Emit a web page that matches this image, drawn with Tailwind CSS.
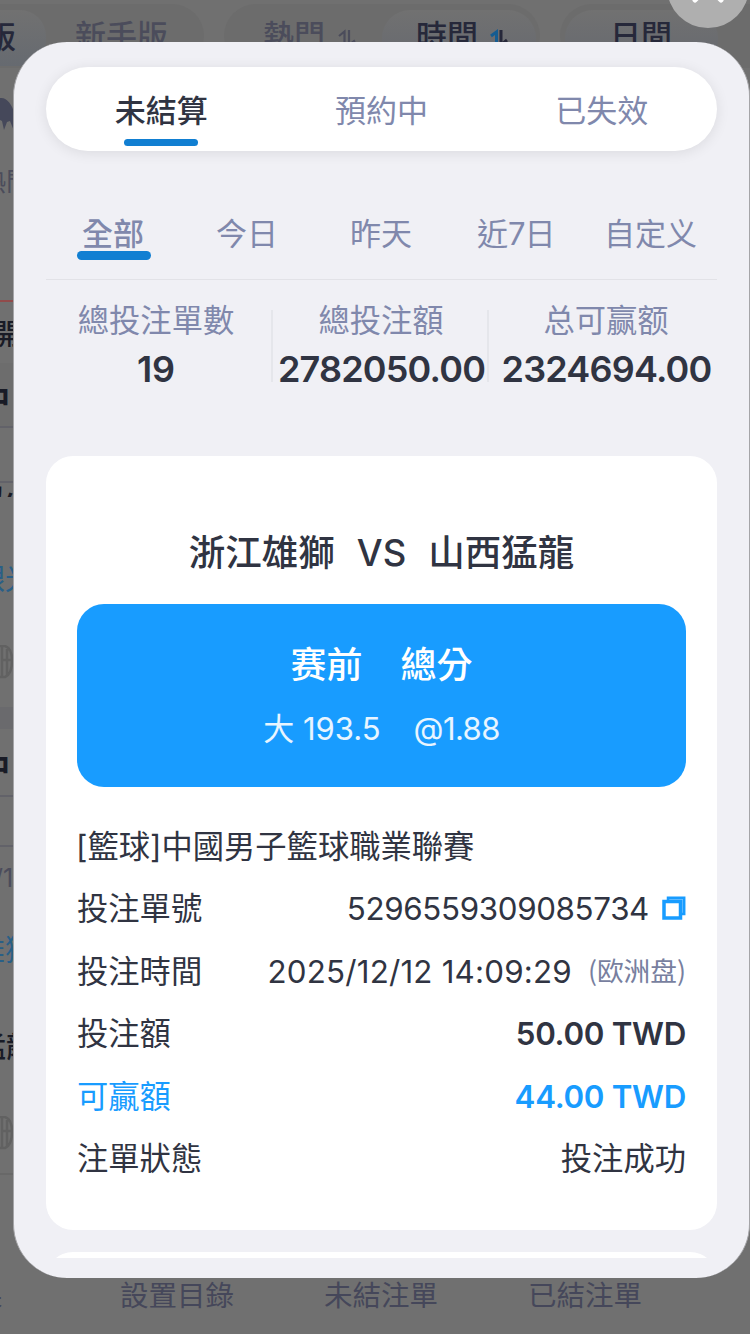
<!DOCTYPE html>
<html lang="zh-Hant">
<head>
<meta charset="utf-8">
<meta name="viewport" content="width=device-width">
<title>未結算注單</title>
<script src="https://cdn.jsdelivr.net/npm/@tailwindcss/browser@4"></script>
</head>
<body class="relative h-[1334px] w-[750px] overflow-hidden bg-[#707070] font-['Inter','Noto_Sans_CJK_TC',sans-serif] text-[#303442] whitespace-nowrap">

<!-- Dimmed page behind the dialog -->
<div class="flex h-full flex-col">
  <header class="flex h-[68px] shrink-0 pt-1 text-[31px] leading-[63px] text-[#4b4c5b]">
    <div class="flex w-[204px] shrink-0 rounded-r-[34px] bg-[#6c6c6c]">
      <div class="mt-1.5 h-[56px] w-[46px] rounded-r-[26px] bg-linear-to-b from-[#717171] to-[#666a70] leading-[53px]"><span class="-ml-[15px] font-medium text-[#26283a]">版</span></div>
      <span class="ml-[29px] font-medium">新手版</span>
    </div>
    <div class="ml-[20px] flex w-[316px] shrink-0 rounded-[34px] bg-[#6c6c6c]">
      <span class="ml-[39px] font-medium">熱門</span>
      <svg class="ml-[13px] mt-[24px] h-[20px] w-[20px]" viewBox="0 0 20 20" fill="none" stroke-width="2.2"><path d="M1 8L6.500 3.500V20" stroke="#4b4c5b"/><path d="M11 2V17L17 12.500" stroke="#4b4c5b"/></svg>
      <div class="ml-[24px] mt-1.5 flex h-[60px] w-[154px] rounded-[28px] bg-linear-to-b from-[#717171] to-[#65686f] pl-[34px] leading-[51px]">
        <span class="font-medium text-[#26283a]">時間</span>
        <svg class="ml-[12px] mt-[18px] h-[20px] w-[20px]" viewBox="0 0 20 20" fill="none" stroke-width="3"><path d="M1 8L6.500 4V20" stroke="#155c91"/><path d="M11 2V17L17 12" stroke="#26283a"/></svg>
      </div>
    </div>
    <div class="ml-[20px] flex flex-1 rounded-l-[34px] bg-[#6c6c6c] pl-[5px] pt-1.5">
      <div class="w-[153px] rounded-[28px] bg-linear-to-b from-[#717171] to-[#65686f] pl-[45px] leading-[51px]"><span class="font-medium text-[#26283a]">日間</span></div>
    </div>
  </header>

  <aside class="flex w-[14px] flex-1 flex-col overflow-hidden text-[#191b26]">
    <svg class="mt-[29px] h-[35px] w-[14px] shrink-0" viewBox="0 0 14 35"><path d="M0 1C7 0 12 8 14 15V34L10 24L7 25L4 33L2 24L0 23Z" fill="#45485a"/></svg>
    <div class="mt-[34px] h-[30px] shrink-0 text-[26px] leading-[31px] text-[#4b4c5b]"><span class="-ml-[20px]">熱門</span></div>
    <div class="mt-[104px] h-[2px] shrink-0 bg-[#914b4b]"></div>
    <div class="mt-[15px] h-[36px] shrink-0 text-[29px] leading-[36px] font-medium"><span class="-ml-[8px]">開</span></div>
    <div class="mt-[10px] h-[65px] shrink-0 border-b-2 border-[#626269] bg-[#6d6d6d] text-[31px] leading-[72px] font-bold"><span class="-ml-[21px]">中</span></div>
    <div class="h-[55px] shrink-0 border-b-2 border-[#626269]"></div>
    <div class="h-[14px] shrink-0 overflow-hidden text-[31px] leading-[36px] font-medium"><span class="-ml-[16px]">火</span></div>
    <div class="mt-[64px] h-[36px] shrink-0 text-[29px] leading-[38px] text-[#285f87]"><span class="-ml-[24px]">銀光</span></div>
    <svg class="mt-[48px] h-[34px] w-[14px] shrink-0" viewBox="0 0 14 34" fill="none" stroke="#616161" stroke-width="2.5"><path d="M0 1H5Q12 3 12 16T5 32H0M2 2V32M7 4V30M2 15H12"/></svg>
    <div class="mt-[28px] h-[22px] shrink-0 bg-[#6a6a6d]"></div>
    <div class="h-[68px] shrink-0 border-b-2 border-[#626269] text-[31px] leading-[76px] font-bold"><span class="-ml-[21px]">中</span></div>
    <div class="h-[50px] shrink-0 border-b-2 border-[#626269]"></div>
    <div class="mt-[14px] h-[34px] shrink-0 text-[25px] leading-[34px] text-[#4b4c5b]"><span class="-ml-[6px]">/1</span></div>
    <div class="mt-[37px] h-[36px] shrink-0 text-[29px] leading-[38px] text-[#285f87]"><span class="-ml-[24px]">雄獅</span></div>
    <div class="mt-[61px] h-[36px] shrink-0 text-[29px] leading-[38px] font-medium"><span class="-ml-[23px]">猛龍</span></div>
    <svg class="mt-[51px] h-[34px] w-[14px] shrink-0" viewBox="0 0 14 34" fill="none" stroke="#616161" stroke-width="2.5"><path d="M0 1H5Q12 3 12 16T5 32H0M2 2V32M7 4V30M2 15H12"/></svg>
    <div class="mt-[23px] h-[2px] shrink-0 bg-[#686868]"></div>
  </aside>

  <footer class="flex h-[60px] shrink-0 text-[28.5px] leading-[44px] text-[#45475a]">
    <div class="w-[120px]"><span class="-ml-[26px]">果</span></div>
    <div class="w-[204px]">設置目錄</div>
    <div class="w-[204px]">未結注單</div>
    <div>已結注單</div>
  </footer>
</div>

<!-- Close button -->
<div class="absolute left-[667px] top-[-54px] flex h-[82px] w-[82px] items-end justify-center rounded-full bg-[#afafaf]">
  <svg class="mb-[25px] h-[32px] w-[32px]" viewBox="0 0 32 32" fill="none" stroke="#fff" stroke-width="5" stroke-linecap="round"><path d="M3 3L29 29M29 3L3 29"/></svg>
</div>

<!-- Bet dialog -->
<main class="absolute left-[13px] top-[42px] flex h-[1236px] w-[737px] flex-col overflow-hidden rounded-[54px] border-l border-r border-[#a5a5a8] bg-[#f0f0f5] pl-8 pr-8 pt-[25px]">
  <nav class="flex h-[84px] w-[671px] shrink-0 rounded-full bg-white pl-[5px] pr-[5px] text-[31px] leading-[88px] text-[#8088ac] shadow-[0_2px_14px_rgba(0,0,0,0.09)]">
    <div class="flex flex-1 flex-col items-center"><span class="h-[72px] font-medium text-[#303442]">未結算</span><span class="h-[7px] w-[74px] rounded-full bg-[#117fd2]"></span></div>
    <div class="flex-1 text-center">預約中</div>
    <div class="flex-1 text-center">已失效</div>
  </nav>

  <div class="mt-[60px] flex h-[69px] w-[671px] shrink-0 border-b border-[#e2e2e7] text-[31px] leading-[46px] text-[#8088ac]">
    <div class="ml-[31px] w-[139px]"><div class="h-[40px] pl-[5px] font-medium">全部</div><div class="h-[9px] w-[74px] rounded-full bg-[#117fd2]"></div></div>
    <div class="w-[134px]">今日</div>
    <div class="w-[127px]">昨天</div>
    <div class="w-[127px]">近<span class="tracking-[-1px]">7</span>日</div>
    <div>自定义</div>
  </div>

  <section class="mt-[17px] flex h-[91px] w-[674px] shrink-0 text-center text-[31.3px] text-[#8088ac]">
    <div class="w-[225px] shrink-0 pr-[5px]"><div class="h-[46px] leading-[48px]">總投注單數</div><div class="text-[36px] leading-[52px] font-[560] tracking-[-0.1px] text-[#303442]">19</div></div>
    <div class="mt-[13px] h-[72px] w-[2px] shrink-0 bg-[#e5e6eb]"></div>
    <div class="flex w-[214px] shrink-0 flex-col items-center"><div class="h-[46px] pl-[2px] leading-[48px]">總投注額</div><div class="pl-[3px] text-[36px] leading-[52px] font-[560] tracking-[-0.8px] text-[#303442]">2782050.00</div></div>
    <div class="mt-[13px] h-[72px] w-[2px] shrink-0 bg-[#e5e6eb]"></div>
    <div class="flex w-[235px] shrink-0 flex-col items-center"><div class="h-[46px] pr-[1px] font-['Inter','Noto_Sans_CJK_SC',sans-serif] leading-[48px]">总可赢额</div><div class="text-[36px] leading-[52px] font-[560] tracking-[-0.8px] text-[#303442]">2324694.00</div></div>
  </section>

  <article class="mt-[68px] flex h-[774px] w-[671px] shrink-0 flex-col rounded-[27px] bg-white px-[31px] pt-[70px]">
    <h1 class="flex h-[54px] shrink-0 justify-center gap-[22px] text-[36.5px] leading-[54px] font-medium"><span>浙江雄獅</span><span class="font-[450]">VS</span><span>山西猛龍</span></h1>
    <div class="mt-[24px] flex h-[183px] shrink-0 flex-col items-center rounded-[27px] bg-[#189cff] pt-[34px] text-white">
      <div class="flex h-[54px] gap-[38px] text-[36px] leading-[54px] font-medium"><span>赛前</span><span>總分</span></div>
      <div class="mt-[13px] flex h-[46px] gap-[33px] text-[31px] leading-[47px] text-white/90"><span>大 <span>193.5</span></span><span class="tracking-[-0.6px]">@1.88</span></div>
    </div>
    <div class="mt-[28px] flex flex-col text-[31.3px] leading-[64px]">
      <div class="h-[62.4px] -ml-px">[籃球]中國男子籃球職業聯賽</div>
      <div class="flex h-[62.4px] justify-between"><span>投注單號</span>
        <span class="flex gap-[13px]"><span class="tracking-[-0.35px]">5296559309085734</span>
          <svg class="mt-[19px] h-[24px] w-[24px]" viewBox="0 0 24 24" fill="none"><path d="M5.500 2H22V18H18V6H5.500Z" fill="#78c4ff"/><path d="M6 5V1.800H22.200V18H18" stroke="#189cff" stroke-width="2.500"/><rect x="2" y="5.500" width="16.500" height="16.500" fill="#fff" stroke="#189cff" stroke-width="3.5"/></svg>
        </span></div>
      <div class="flex h-[62.4px] justify-between"><span>投注時間</span>
        <span class="flex gap-[16px]"><span class="tracking-[0.2px]">2025/12/12 14:09:29</span><span class="font-['Noto_Sans_CJK_SC',sans-serif] text-[26.7px] leading-[60px] text-[#787f9f]">(欧洲盘)</span></span></div>
      <div class="flex h-[62.4px] justify-between"><span>投注額</span><span class="font-[560] tracking-[-0.3px]">50.00 TWD</span></div>
      <div class="flex h-[62.4px] justify-between text-[#189cff]"><span>可贏額</span><span class="font-[560] tracking-[-0.3px]">44.00 TWD</span></div>
      <div class="flex h-[62.4px] justify-between"><span>注單狀態</span><span>投注成功</span></div>
    </div>
  </article>

  <div class="mt-[22px] h-[6px] w-[671px] shrink-0 overflow-hidden"><div class="h-[60px] rounded-[27px] bg-white"></div></div>
</main>
</body>
</html>
